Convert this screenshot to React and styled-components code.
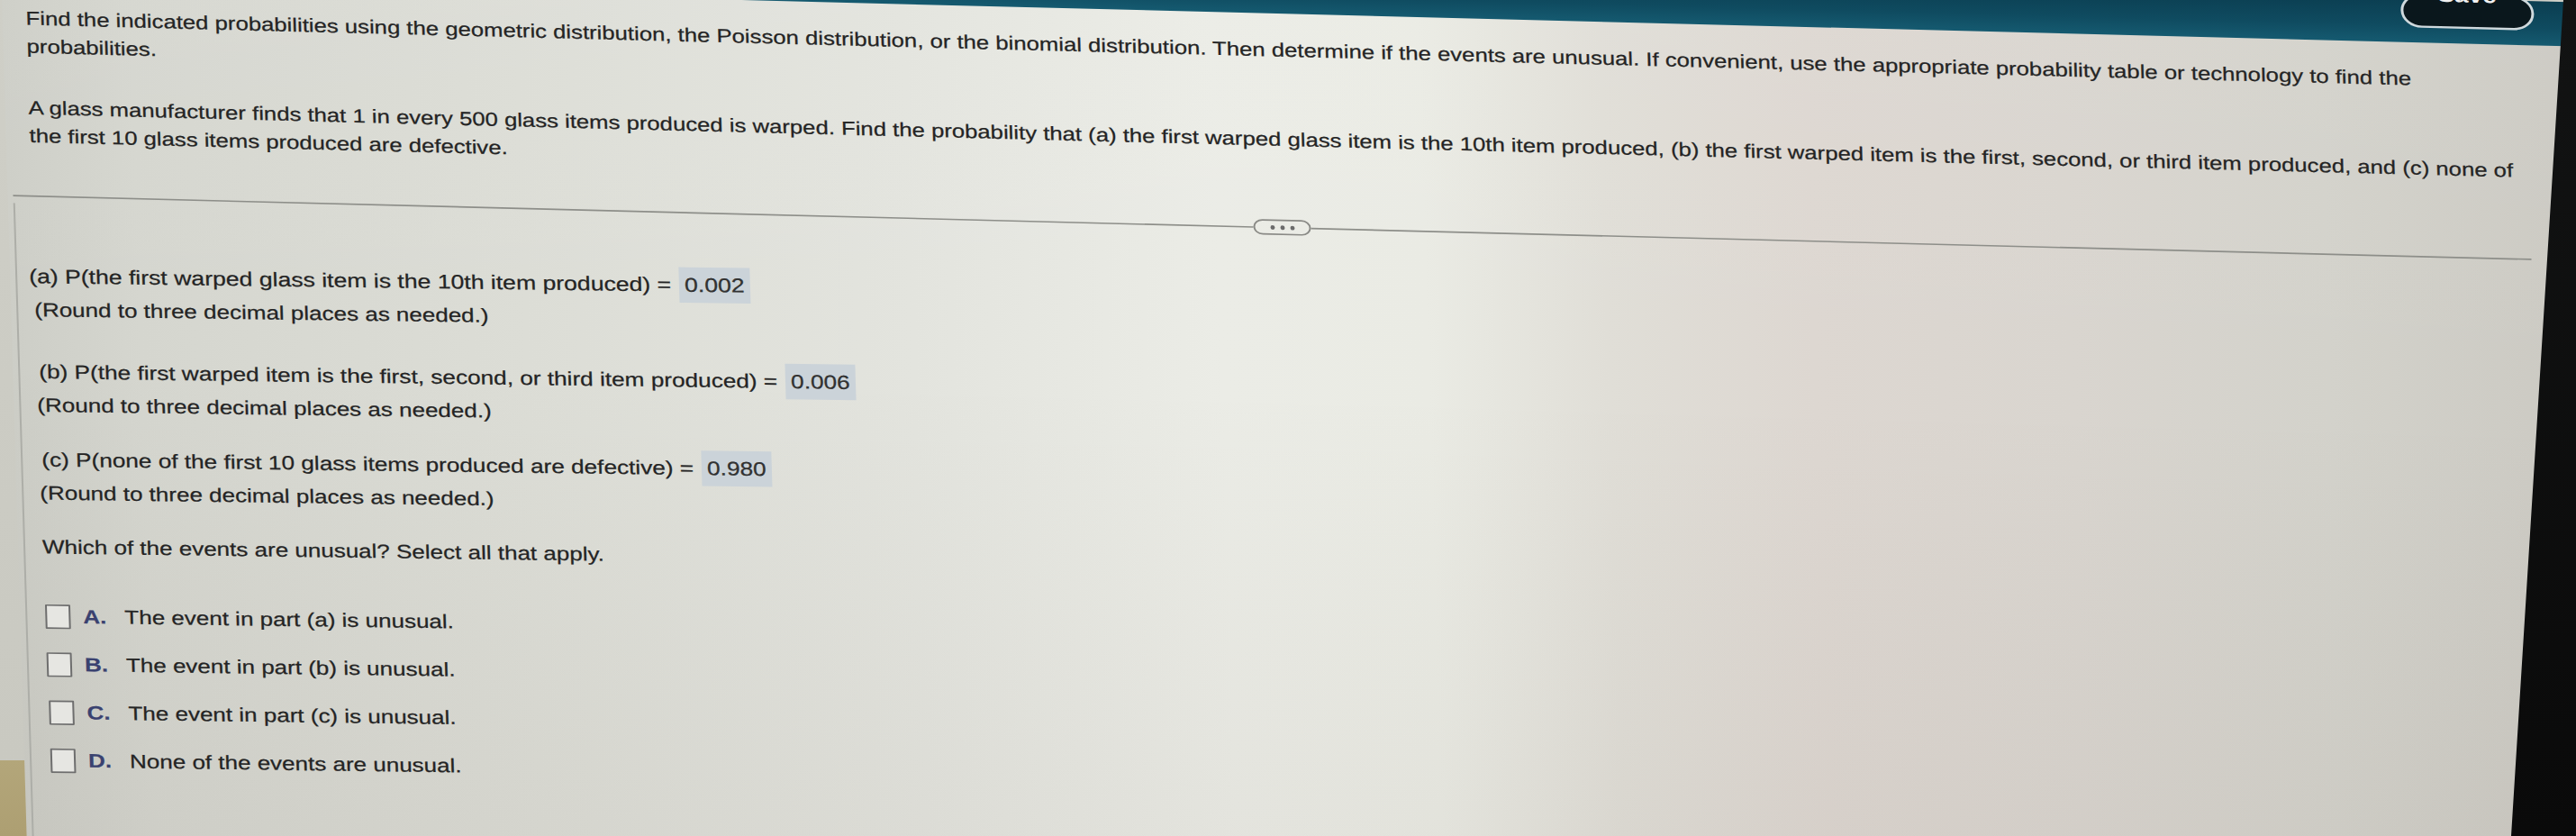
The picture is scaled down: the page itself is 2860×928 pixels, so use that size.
import React from 'react'
import styled, { createGlobalStyle } from 'styled-components'

const GlobalStyle = createGlobalStyle`
  html,
  body {
    margin: 0;
    padding: 0;
  }

  body {
    width: 2860px;
    height: 928px;
    overflow: hidden;
    background: #cfcfc7;
    font-family: "Liberation Sans", Arial, sans-serif;
  }
`

// the whole screen, photographed slightly from the side
const Photo = styled.div`
  position: relative;
  width: 2860px;
  height: 928px;
  overflow: hidden;
  background: linear-gradient(180deg, #cfcfc7 0%, #c9c9c1 91%, #b3a67a 91%, #ad9f72 100%);
`

const Page = styled.div`
  width: 2860px;
  min-height: 1320px;
  transform-origin: 0 0;
  transform: translateY(-70px) skew(1.7deg, 1.45deg) scaleY(0.82);
  color: #242424;
  -webkit-text-stroke: 0.3px #242424;
  background:
    linear-gradient(180deg, rgba(255, 255, 255, 0.05) 0%, rgba(0, 0, 0, 0) 40%, rgba(60, 40, 30, 0.06) 100%),
    linear-gradient(
      90deg,
      #cdcec7 0%,
      #d5d6cf 5%,
      #dcddd6 20%,
      #e3e4de 35%,
      #ebece6 47%,
      #eaebe4 55%,
      #e0ded7 62%,
      #ddd7d1 70%,
      #d9d5cf 80%,
      #d3d2cb 90%,
      #cbc9c2 100%
    );
`

const TopBar = styled.header`
  height: 60px;
  box-sizing: border-box;
  display: flex;
  justify-content: flex-end;
  align-items: flex-end;
  padding: 0 47px 20px 0;
  background: linear-gradient(180deg, #0b3e51 0%, #0f4b60 60%, #155a70 100%);
  -webkit-text-stroke: 0;
`

const SaveButton = styled.button`
  width: 148px;
  height: 46px;
  box-sizing: border-box;
  padding: 0;
  border: 3px solid #cfd9dd;
  border-radius: 24px;
  background: #0a171c;
  color: #f2f2f2;
  font: bold 28px "Liberation Sans", Arial, sans-serif;
  display: flex;
  justify-content: center;
  align-items: flex-start;

  span {
    margin-top: -12px;
    line-height: 20px;
  }
`

const Intro = styled.section`
  padding: 30px 0 0 26px;
  font-size: 25.7px;
  line-height: 38px;
  white-space: nowrap;
`

const Para = styled.p`
  margin: 0;

  & + & {
    margin-top: 45px;
  }
`

const Divider = styled.div`
  display: flex;
  align-items: center;
  height: 21px;
  margin: 52px 58px 0 6px;
`

const Rule = styled.div`
  height: 2px;
  background: #8d8e89;
  flex: ${(p) => (p.$grow ? '1 1 auto' : '0 0 1377px')};
`

const MoreButton = styled.div`
  width: 64px;
  height: 21px;
  box-sizing: border-box;
  border: 2px solid #8a8a86;
  border-radius: 11px;
  display: flex;
  align-items: center;
  justify-content: center;
  gap: 6px;
`

const Dot = styled.span`
  width: 5px;
  height: 6px;
  border-radius: 50%;
  background: #6b6b6b;
`

const Body = styled.main`
  margin-left: 6px;
  border-left: 2px solid #adaea8;
  padding: 75px 0 0 18px;
  min-height: 960px;
  font-size: 26px;
  line-height: 43px;
  transform-origin: 0 0;
  transform: skewY(-0.85deg);
`

const Question = styled.div`
  margin-top: ${(p) => p.$gap}px;
`

const Prompt = styled.div`
  display: flex;
  align-items: center;
  min-height: 48px;
  margin-left: ${(p) => p.$shift}px;
  font-size: ${(p) => p.$size}px;
  white-space: pre;
`

const Answer = styled.span`
  display: inline-block;
  height: 48px;
  line-height: 48px;
  margin-left: 9px;
  padding: 0 6px;
  background: #cbd3d9;
  color: #333;
`

const Hint = styled.div`
  line-height: 43px;
`

const Ask = styled.p`
  margin: 30px 0 0 1px;
  line-height: 43px;
`

const Options = styled.div`
  margin-top: 40px;
  display: flex;
  flex-direction: column;
`

const Option = styled.label`
  height: 65px;
  display: flex;
  align-items: center;
  padding-left: ${(p) => p.$shift}px;
`

const Check = styled.span`
  width: 28px;
  height: 33px;
  box-sizing: border-box;
  border: 2px solid #6e6e6e;
  border-radius: 1px;
  background: #e6e6e2;
  margin-right: 14px;
  -webkit-text-stroke: 0;
`

const Letter = styled.span`
  width: 46px;
  font-weight: bold;
  color: #3a4270;
  -webkit-text-stroke: 0.2px #3a4270;
`

const Bezel = styled.div`
  position: absolute;
  top: 0;
  right: 0;
  bottom: 0;
  width: 72px;
  background: linear-gradient(180deg, #121313 0%, #0a0a0a 100%);
  clip-path: polygon(58px 0, 100% 0, 100% 100%, 0 100%);
`

const questions = [
  { id: 'a', gap: 0, shift: -5, size: 26.6, text: '(a) P(the first warped glass item is the 10th item produced) =', value: '0.002' },
  { id: 'b', gap: 38, shift: 3, size: 26.2, text: '(b) P(the first warped item is the first, second, or third item produced) =', value: '0.006' },
  { id: 'c', gap: 28, shift: 3, size: 26.2, text: '(c) P(none of the first 10 glass items produced are defective) =', value: '0.980' },
]

const options = [
  { letter: 'A.', text: 'The event in part (a) is unusual.', shift: 2 },
  { letter: 'B.', text: 'The event in part (b) is unusual.', shift: 2 },
  { letter: 'C.', text: 'The event in part (c) is unusual.', shift: 3 },
  { letter: 'D.', text: 'None of the events are unusual.', shift: 3 },
]

export default function App() {
  return (
    <Photo>
      <GlobalStyle />
      <Page>
        <TopBar>
          <SaveButton>
            <span>Save</span>
          </SaveButton>
        </TopBar>

        <Intro>
          <Para>
            Find the indicated probabilities using the geometric distribution, the Poisson distribution, or the
            binomial distribution. Then determine if the events are unusual. If convenient, use the appropriate
            probability table or technology to find the
            <br />
            probabilities.
          </Para>
          <Para>
            A glass manufacturer finds that 1 in every 500 glass items produced is warped. Find the probability that
            (a) the first warped glass item is the 10th item produced, (b) the first warped item is the first, second,
            or third item produced, and (c) none of
            <br />
            the first 10 glass items produced are defective.
          </Para>
        </Intro>

        <Divider>
          <Rule />
          <MoreButton>
            <Dot />
            <Dot />
            <Dot />
          </MoreButton>
          <Rule $grow />
        </Divider>

        <Body>
          {questions.map((q) => (
            <Question key={q.id} $gap={q.gap}>
              <Prompt $shift={q.shift} $size={q.size}>
                {q.text}
                <Answer>{q.value}</Answer>
              </Prompt>
              <Hint>(Round to three decimal places as needed.)</Hint>
            </Question>
          ))}

          <Ask>Which of the events are unusual? Select all that apply.</Ask>

          <Options>
            {options.map((o) => (
              <Option key={o.letter} $shift={o.shift}>
                <Check />
                <Letter>{o.letter}</Letter>
                {o.text}
              </Option>
            ))}
          </Options>
        </Body>
      </Page>
      <Bezel />
    </Photo>
  )
}
